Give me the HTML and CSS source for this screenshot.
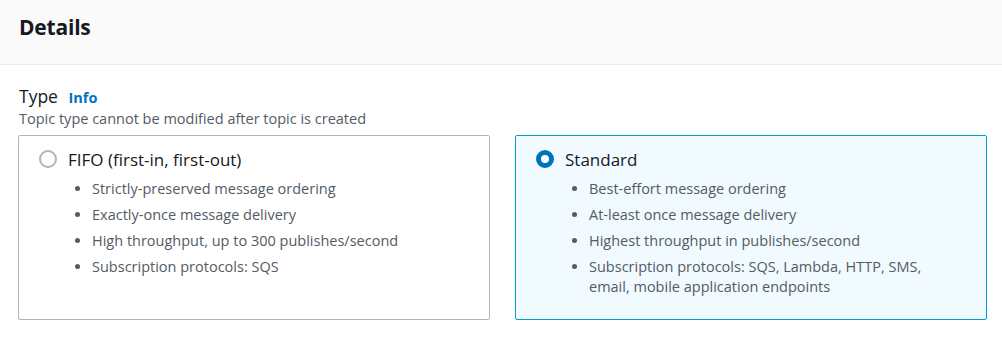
FILE: index.html
```html
<!DOCTYPE html>
<html lang="en">
<head>
  <meta charset="UTF-8">
  <title>Details</title>
  <link rel="stylesheet" href="styles.css">
</head>
<body>
  <div class="panel">
    <div class="panel-header">
      <h2>Details</h2>
    </div>

    <div class="panel-body">
      <!-- Topic type -->
      <div class="field-label">Type <a class="info" href="#">Info</a></div>
      <div class="field-desc">Topic type cannot be modified after topic is created</div>

      <div class="tiles">
        <label class="tile">
          <div class="tile-head">
            <span class="radio"></span>
            <span class="tile-title">FIFO (first-in, first-out)</span>
          </div>
          <ul class="tile-list">
            <li>Strictly-preserved message ordering</li>
            <li>Exactly-once message delivery</li>
            <li>High throughput, up to 300 publishes/second</li>
            <li>Subscription protocols: SQS</li>
          </ul>
        </label>

        <label class="tile selected">
          <div class="tile-head">
            <span class="radio"></span>
            <span class="tile-title">Standard</span>
          </div>
          <ul class="tile-list">
            <li>Best-effort message ordering</li>
            <li>At-least once message delivery</li>
            <li>Highest throughput in publishes/second</li>
            <li>Subscription protocols: SQS, Lambda, HTTP, SMS, email, mobile application endpoints</li>
          </ul>
        </label>
      </div>
    </div>
  </div>
</body>
</html>
```

FILE: styles.css
```css
body {
  margin: 0;
  font-family: 'Open Sans', 'Liberation Sans', sans-serif;
  color: #16191f;
  background: #fff;
}
.panel-header {
  background: #fafafa;
  border-bottom: 1px solid #eaeded;
  height: 65px;
  box-sizing: border-box;
  padding: 13px 19px 0;
}
.panel-header h2 {
  margin: 0;
  font-size: 21px;
  line-height: 28px;
  font-weight: 700;
  letter-spacing: -0.2px;
}
.panel-body {
  padding: 20px 15px 0 18px;
}
.field-label {
  font-size: 17.5px;
  line-height: 22px;
  padding-left: 1px;
}
.info {
  color: #0073bb;
  font-weight: 700;
  font-size: 14.5px;
  text-decoration: none;
  margin-left: 6px;
}
.field-desc {
  font-size: 14.5px;
  line-height: 20px;
  color: #545b64;
  padding-left: 1px;
}
.tiles {
  display: grid;
  grid-template-columns: 1fr 1fr;
  gap: 25px;
  margin-top: 6px;
}
.tile {
  display: block;
  height: 185px;
  box-sizing: border-box;
  border: 1px solid #aab7b8;
  border-radius: 2px;
  padding: 11px 26px 0 20px;
}
.tile.selected {
  border-color: #00a1c9;
  background: #f1faff;
}
.tile-head {
  display: flex;
  align-items: center;
  gap: 11px;
  height: 24px;
}
.radio {
  width: 14px;
  height: 14px;
  border: 2px solid #aab7b8;
  border-radius: 50%;
  background: #fff;
}
.selected .radio {
  width: 8px;
  height: 8px;
  border: 5px solid #0073bb;
}
.tile-title {
  font-size: 17px;
}
.tile-list {
  margin: 8px 0 0;
  padding-left: 53px;
  font-size: 14.5px;
  line-height: 20px;
  color: #545b64;
}
.tile-list li {
  margin-bottom: 6px;
}
```
